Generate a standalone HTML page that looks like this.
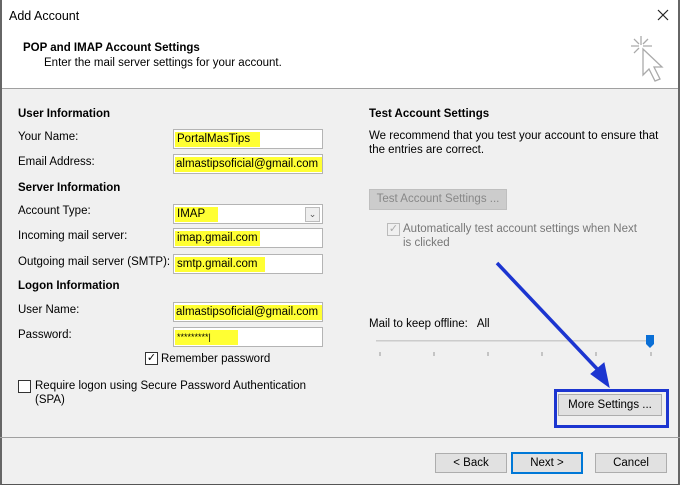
<!DOCTYPE html>
<html><head><style>
*{margin:0;padding:0;box-sizing:border-box}
body{width:680px;height:485px;overflow:hidden;font-family:"Liberation Sans",sans-serif;font-size:11.5px;color:#000;background:#f0f0f0;position:relative}
.a{position:absolute;white-space:nowrap}
.b{font-weight:bold}
.in{position:absolute;background:#fff;border:1px solid #b4b4b4;height:20px;width:150px;left:173px}
.hl{position:absolute;background:#ffff33;top:2px;height:15px;left:1px;padding-left:2px;line-height:15px;font-size:11.5px}
.btn{position:absolute;background:#e1e1e1;border:1px solid #adadad;text-align:center;line-height:19px}
.cb{position:absolute;width:13px;height:13px;border:1px solid #333;background:#fff}
</style></head><body>
<div class="a" style="left:0;top:0;width:680px;height:89px;background:#fff;border-bottom:1px solid #a0a0a0"></div>
<div class="a" style="left:0;top:0;width:680px;height:485px;border:1px solid #555;border-top:none;border-left:2px solid #666;border-right:2px solid #666"></div>
<div class="a" style="left:9px;top:9px;font-size:12.5px">Add Account</div>
<svg class="a" style="left:657px;top:9px" width="12" height="12"><path d="M1 1L11 11M11 1L1 11" stroke="#222" stroke-width="1.2"/></svg>
<div class="a b" style="left:23px;top:42px;font-size:11.5px">POP and IMAP Account Settings</div>
<div class="a" style="left:44px;top:57px">Enter the mail server settings for your account.</div>
<svg class="a" style="left:628px;top:34px" width="40" height="52"><g stroke="#aaa" stroke-width="1.3" fill="none"><path d="M13 2v9M3 12h8M15 12h9M6 5l5 5M20 5l-5 5M6 19l5-5"/><path d="M15 15l0 26 6-6 6 12 5-2-6-12 8 0z" fill="#fff"/></g></svg>

<div class="a b" style="left:18px;top:108px">User Information</div>
<div class="a" style="left:18px;top:131px">Your Name:</div>
<div class="in" style="top:129px"><div class="hl" style="width:85px">PortalMasTips</div></div>
<div class="a" style="left:18px;top:156px">Email Address:</div>
<div class="in" style="top:154px"><div class="hl" style="width:147px;padding-left:1px">almastipsoficial@gmail.com</div></div>
<div class="a b" style="left:18px;top:182px">Server Information</div>
<div class="a" style="left:18px;top:205px">Account Type:</div>
<div class="in" style="top:204px"><div class="hl" style="width:43px">IMAP</div><div class="a" style="right:2px;top:2px;width:15px;height:15px;border:1px solid #bbb;background:#eee;font-size:9px;text-align:center;line-height:13px;color:#555">&#8964;</div></div>
<div class="a" style="left:18px;top:230px">Incoming mail server:</div>
<div class="in" style="top:228px"><div class="hl" style="width:85px">imap.gmail.com</div></div>
<div class="a" style="left:18px;top:256px">Outgoing mail server (SMTP):</div>
<div class="in" style="top:254px"><div class="hl" style="width:90px">smtp.gmail.com</div></div>
<div class="a b" style="left:18px;top:280px">Logon Information</div>
<div class="a" style="left:18px;top:304px">User Name:</div>
<div class="in" style="top:302px"><div class="hl" style="width:147px;padding-left:1px">almastipsoficial@gmail.com</div></div>
<div class="a" style="left:18px;top:329px">Password:</div>
<div class="in" style="top:327px"><div class="hl" style="width:63px;font-size:9px">*********|</div></div>
<div class="cb" style="left:145px;top:352px;font-size:11px;line-height:11px;text-align:center">✓</div>
<div class="a" style="left:161px;top:353px">Remember password</div>
<div class="cb" style="left:18px;top:380px"></div>
<div class="a" style="left:35px;top:380px">Require logon using Secure Password Authentication</div>
<div class="a" style="left:35px;top:394px">(SPA)</div>

<div class="a b" style="left:369px;top:108px">Test Account Settings</div>
<div class="a" style="left:369px;top:130px">We recommend that you test your account to ensure that</div>
<div class="a" style="left:369px;top:144px">the entries are correct.</div>
<div class="btn" style="left:369px;top:189px;width:138px;height:21px;background:#ccc;border-color:#bfbfbf;color:#888">Test Account Settings ...</div>
<div class="cb" style="left:387px;top:223px;border-color:#bbb;background:#f0f0f0;color:#aaa;font-size:11px;line-height:11px;text-align:center">✓</div>
<div class="a" style="left:403px;top:223px;color:#777">Automatically test account settings when Next</div>
<div class="a" style="left:403px;top:237px;color:#777">is clicked</div>
<div class="a" style="left:369px;top:318px">Mail to keep offline:&nbsp;&nbsp; All</div>
<div class="a" style="left:376px;top:340px;width:277px;height:2px;background:#ddd;border-top:1px solid #ccc"></div>
<svg class="a" style="left:374px;top:334px" width="290" height="24"><path d="M272 1h8v9l-4 4-4-4z" fill="#0a6fd6"/><g stroke="#999"><path d="M6 18v4M60 18v4M114 18v4M168 18v4M222 18v4M277 18v4"/></g></svg>
<svg class="a" style="left:0;top:0" width="680" height="485"><g stroke="#1c35d0" fill="#1c35d0"><path d="M497 263L600 372" stroke-width="3.5"/><path d="M609 387L591 374 604 363z"/><rect x="555.5" y="390.5" width="112" height="36" fill="none" stroke-width="3"/></g></svg>
<div class="btn" style="left:558px;top:394px;width:104px;height:22px;line-height:20px">More Settings ...</div>
<div class="a" style="left:0;top:437px;width:680px;height:1px;background:#a0a0a0"></div>
<div class="btn" style="left:435px;top:453px;width:72px;height:20px">&lt; Back</div>
<div class="btn" style="left:511px;top:452px;width:72px;height:22px;border:2px solid #0078d7;line-height:18px">Next &gt;</div>
<div class="btn" style="left:595px;top:453px;width:72px;height:20px">Cancel</div>
</body></html>
